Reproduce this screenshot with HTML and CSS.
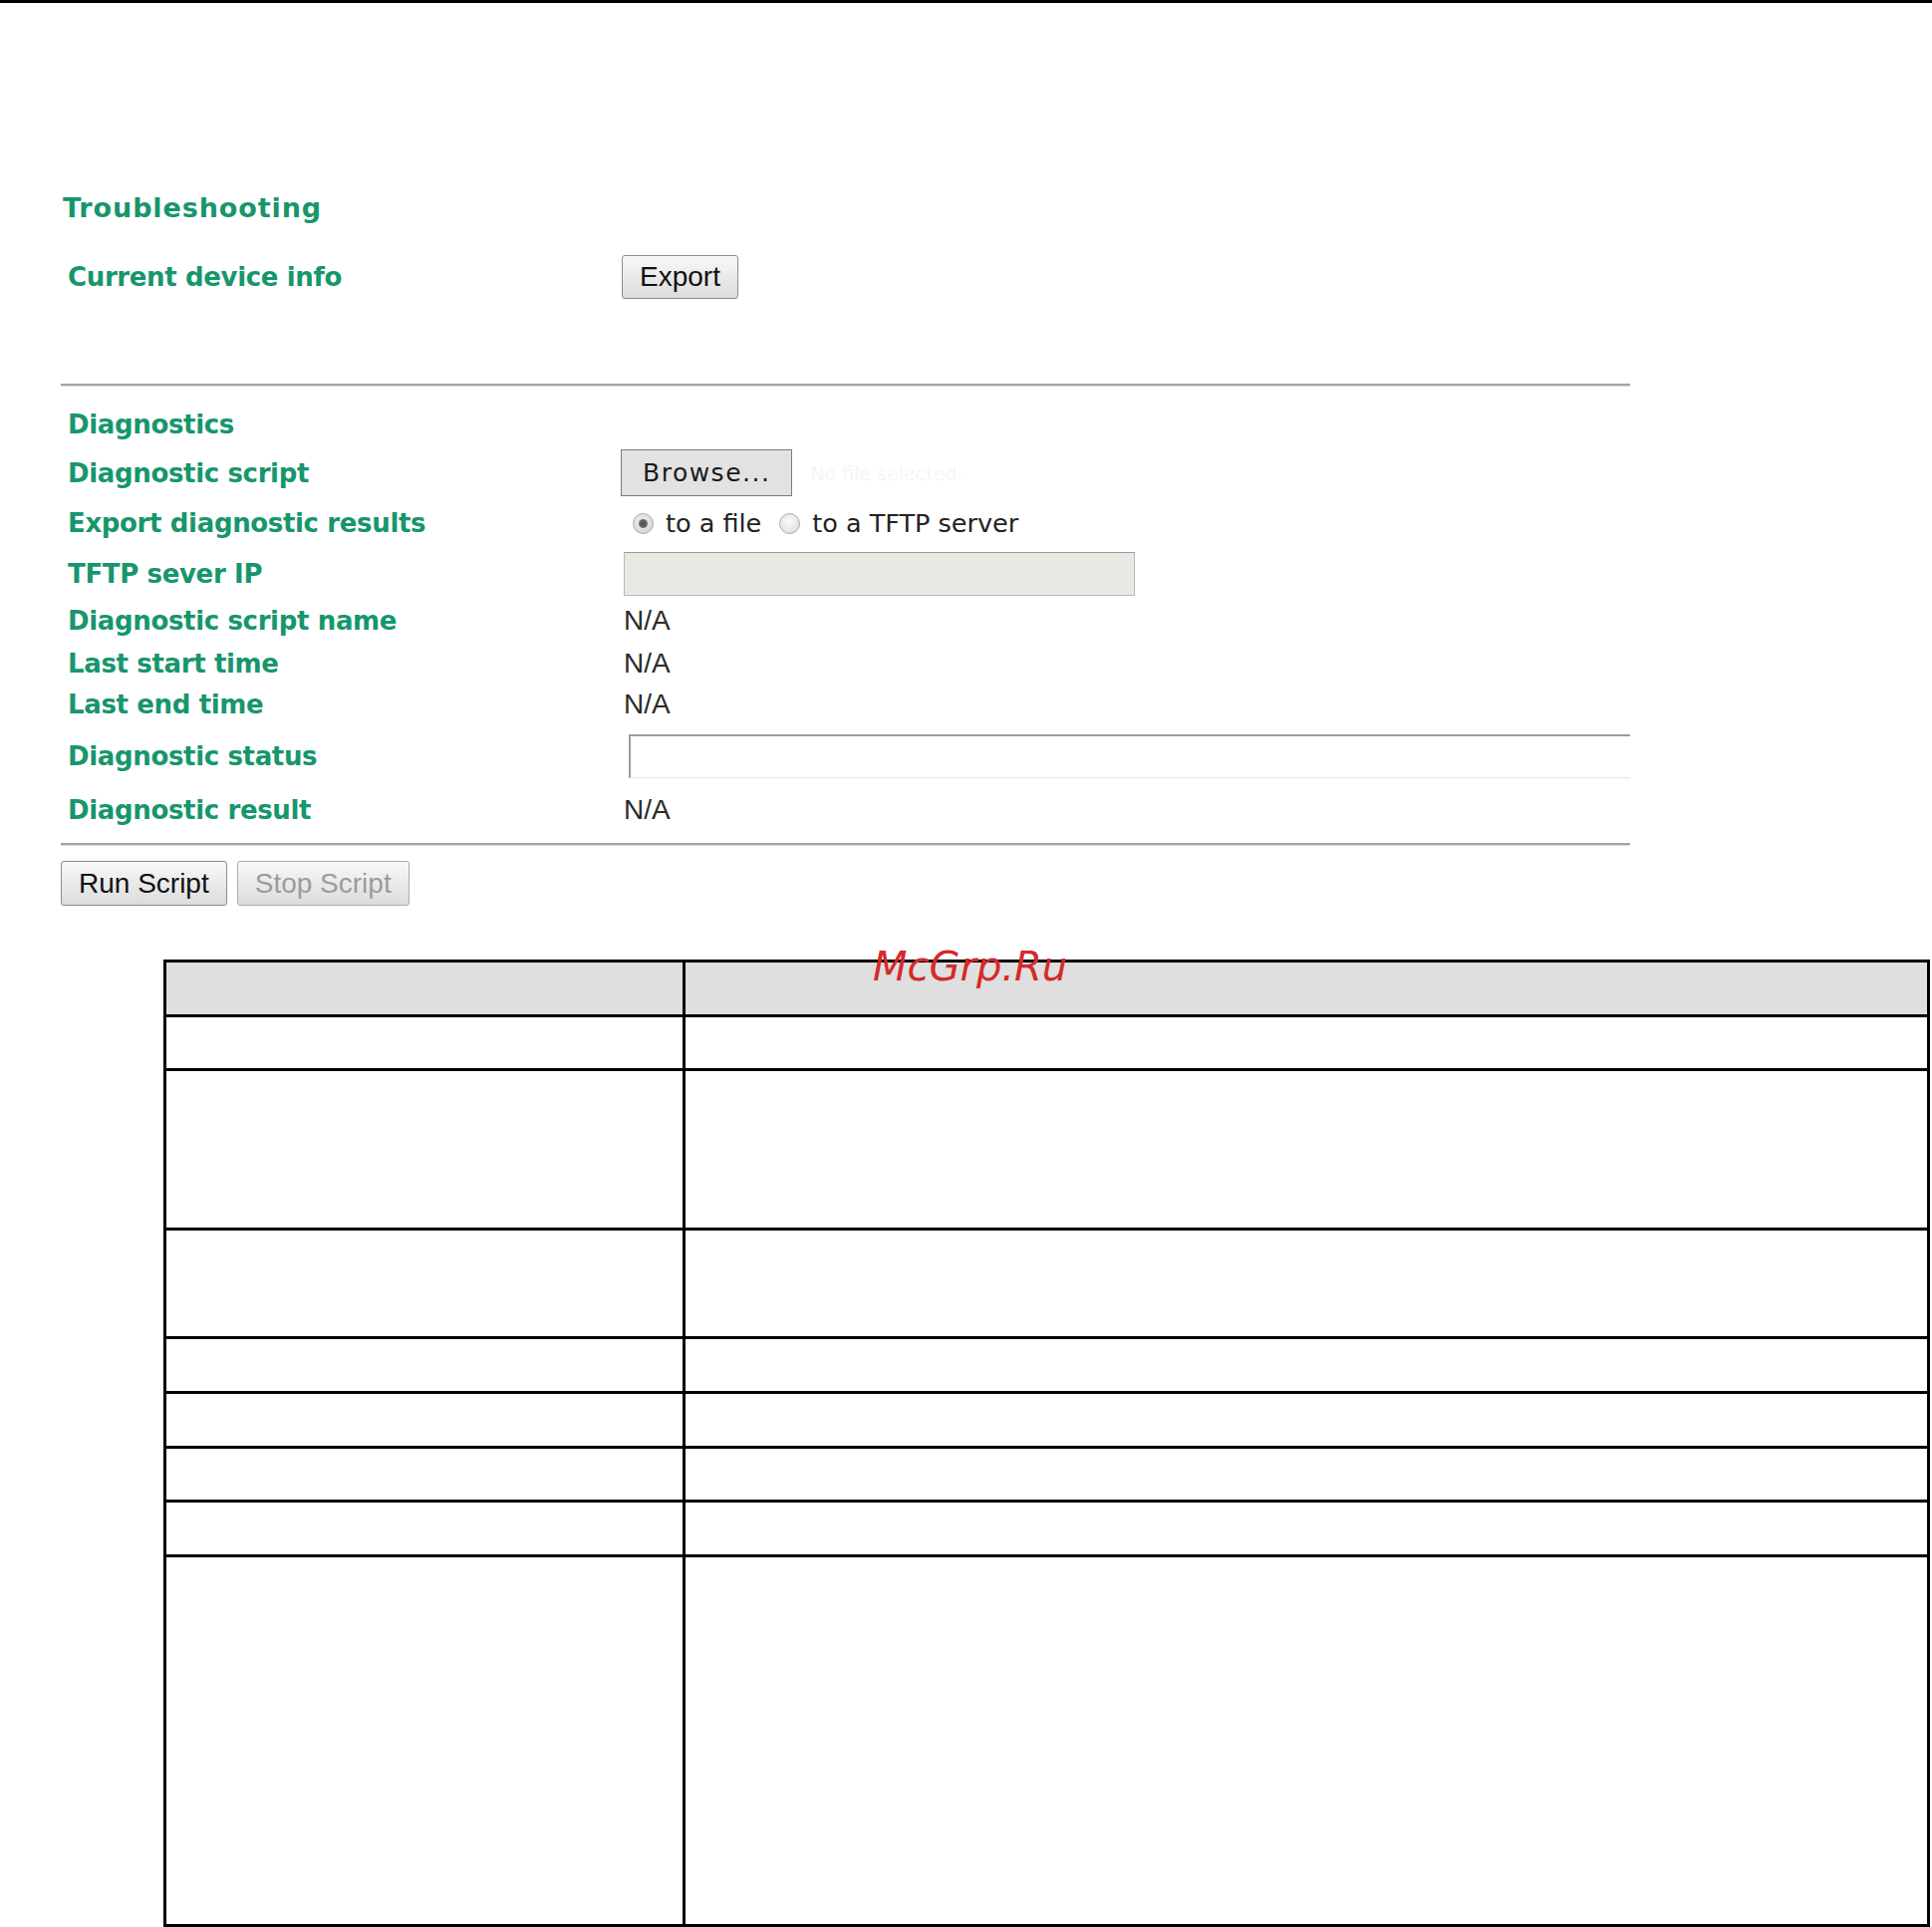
FILE: index.html
```html
<!DOCTYPE html>
<html lang="en">
<head>
<meta charset="utf-8">
<title>Troubleshooting</title>
<link rel="stylesheet" href="styles.css">
</head>
<body>
<div class="topbar"></div>
<div class="panel">
  <h1 class="title">Troubleshooting</h1>
  <div class="row row-device">
    <div class="label">Current device info</div>
    <div class="value"><button class="btn btn-export" type="button">Export</button></div>
  </div>
  <div class="rule rule-top"></div>
  <div class="form">
    <div class="row r-diag"><div class="label">Diagnostics</div></div>
    <div class="row r-script">
      <div class="label">Diagnostic script</div>
      <div class="value"><button class="browse" type="button">Browse...</button><span class="nofile">No file selected.</span></div>
    </div>
    <div class="row r-export">
      <div class="label">Export diagnostic results</div>
      <div class="value">
        <span class="choice choice-first"><span class="radio checked"></span>to a file</span>
        <span class="choice choice-second"><span class="radio"></span>to a TFTP server</span>
      </div>
    </div>
    <div class="row r-tftp">
      <div class="label">TFTP sever IP</div>
      <div class="value"><div class="field"></div></div>
    </div>
    <div class="row r-name">
      <div class="label">Diagnostic script name</div>
      <div class="value"><span class="na">N/A</span></div>
    </div>
    <div class="row r-start">
      <div class="label">Last start time</div>
      <div class="value"><span class="na">N/A</span></div>
    </div>
    <div class="row r-end">
      <div class="label">Last end time</div>
      <div class="value"><span class="na">N/A</span></div>
    </div>
    <div class="row r-status">
      <div class="label">Diagnostic status</div>
      <div class="value"><div class="status"></div></div>
    </div>
    <div class="row r-result">
      <div class="label">Diagnostic result</div>
      <div class="value"><span class="na">N/A</span></div>
    </div>
  </div>
  <div class="rule rule-bottom"></div>
  <div class="actions">
    <button class="btn btn-action" type="button">Run Script</button>
    <button class="btn btn-action" type="button" disabled>Stop Script</button>
  </div>
</div>
<div class="spec-wrap">
  <div class="spec">
    <div class="cell head"></div><div class="cell head"></div>
    <div class="cell"></div><div class="cell"></div>
    <div class="cell"></div><div class="cell"></div>
    <div class="cell"></div><div class="cell"></div>
    <div class="cell"></div><div class="cell"></div>
    <div class="cell"></div><div class="cell"></div>
    <div class="cell"></div><div class="cell"></div>
    <div class="cell"></div><div class="cell"></div>
    <div class="cell"></div><div class="cell"></div>
  </div>
  <span class="watermark">McGrp.Ru</span>
</div>
</body>
</html>
```
FILE: styles.css
```css
html, body {
  margin: 0;
  padding: 0;
  background: #ffffff;
}

body {
  font-family: "DejaVu Sans", Verdana, sans-serif;
  color: #222222;
}

.topbar {
  height: 3px;
  background: #000000;
}

.panel {
  margin-left: 61px;
  width: 1575px;
  overflow: hidden;
}

.title {
  margin: 188px 0 0;
  height: 36px;
  line-height: 36px;
  padding-left: 2px;
  font-family: "DejaVu Sans", Verdana, sans-serif;
  font-weight: bold;
  font-size: 27px;
  letter-spacing: 0.9px;
  color: #17966c;
}

.row {
  display: flex;
  align-items: center;
}

.label {
  flex: none;
  box-sizing: border-box;
  width: 563px;
  padding-left: 7px;
  font-family: "DejaVu Sans", Verdana, sans-serif;
  font-weight: bold;
  font-size: 26px;
  letter-spacing: -0.35px;
  color: #17966c;
  white-space: nowrap;
}

.value {
  flex: 1;
  display: flex;
  align-items: center;
  min-width: 0;
}

.row-device {
  margin-top: 27px;
  height: 48px;
}

.rule {
  height: 0;
  border-top: 2px solid #a3a3a3;
  border-bottom: 1px solid #dadada;
}

.rule-top {
  margin-top: 83px;
}

.form {
  margin-top: 14px;
}

.r-diag { height: 48px; }
.r-script { height: 49px; }
.r-export { height: 52px; }
.r-tftp { height: 50px; }
.r-name { height: 44px; }
.r-start { height: 42px; }
.r-end { height: 40px; }
.r-status { height: 64px; }
.r-result { height: 43px; }

.rule-bottom {
  margin-top: 12px;
}

.actions {
  margin-top: 15px;
  display: flex;
  gap: 10px;
}

.btn {
  box-sizing: border-box;
  margin: 0;
  padding: 0 17px;
  font-family: "Liberation Sans", Arial, sans-serif;
  font-size: 28px;
  color: #111111;
  background: linear-gradient(#f8f8f8, #dcdcdc);
  border: 1px solid #8d8d8d;
  border-radius: 3px;
}

.btn-export {
  height: 44px;
}

.btn-action {
  height: 45px;
}

.btn:disabled {
  color: #9b9b9b;
  border-color: #ababab;
}

.browse {
  box-sizing: border-box;
  margin: 0 0 0 -1px;
  height: 47px;
  padding: 0 21px;
  font-family: "DejaVu Sans", Verdana, sans-serif;
  font-size: 25px;
  letter-spacing: 1.5px;
  color: #1a1a1a;
  background: #e2e2e2;
  border: 1px solid #7c7c7c;
  border-radius: 0;
}

.nofile {
  margin-left: 18px;
  font-family: "DejaVu Sans", Verdana, sans-serif;
  font-size: 19px;
  color: #f6f6f6;
}

.choice {
  display: inline-flex;
  align-items: center;
  font-family: "DejaVu Sans", Verdana, sans-serif;
  font-size: 25.5px;
  color: #222222;
  white-space: nowrap;
}

.choice-first {
  margin-left: 11px;
}

.choice-second {
  margin-left: 18px;
}

.radio {
  position: relative;
  flex: none;
  box-sizing: border-box;
  width: 21px;
  height: 21px;
  margin-right: 12px;
  border: 1px solid #a9a9a9;
  border-radius: 50%;
  background: radial-gradient(circle at 45% 40%, #fbfbfb 0%, #e6e6e6 60%, #d0d0d0 100%);
}

.radio.checked {
  background: radial-gradient(circle at 45% 40%, #f0f0f0 0%, #dcdcdc 60%, #c6c6c6 100%);
}

.radio.checked::after {
  content: "";
  position: absolute;
  left: 5px;
  top: 5px;
  width: 9px;
  height: 9px;
  border-radius: 50%;
  background: radial-gradient(circle, #4a4a4a 0%, #6a6a6a 60%, #999999 100%);
}

.field {
  box-sizing: border-box;
  margin-left: 2px;
  width: 513px;
  height: 44px;
  background: #e9e9e3;
  border: 1px solid #b9b9b9;
  border-top-color: #9c9c9c;
}

.na {
  margin-left: 2px;
  font-family: "Liberation Sans", Arial, sans-serif;
  font-size: 28px;
  color: #2a2a2a;
}

.status {
  box-sizing: border-box;
  flex: none;
  margin-left: 7px;
  width: 1100px;
  height: 44px;
  background: #ffffff;
  border-top: 2px solid #9d9d9d;
  border-left: 2px solid #9d9d9d;
  border-bottom: 1px solid #e6e6e6;
}

.spec-wrap {
  position: relative;
  margin: 54px 0 0 164px;
  width: 1773px;
}

.spec {
  display: grid;
  grid-template-columns: 521px 1249px;
  grid-template-rows: 55px 54px 160px 109px 55px 55px 54px 55px 371px;
  border-top: 3px solid #000000;
  border-left: 3px solid #000000;
}

.cell {
  box-sizing: border-box;
  border-right: 3px solid #000000;
  border-bottom: 3px solid #000000;
  background: #ffffff;
}

.cell.head {
  background: #dfdfdf;
}

.watermark {
  position: absolute;
  left: 712px;
  top: -13px;
  font-family: "DejaVu Sans", Verdana, sans-serif;
  font-style: italic;
  font-size: 40px;
  line-height: 40px;
  color: #d42a2a;
  white-space: nowrap;
}
```
